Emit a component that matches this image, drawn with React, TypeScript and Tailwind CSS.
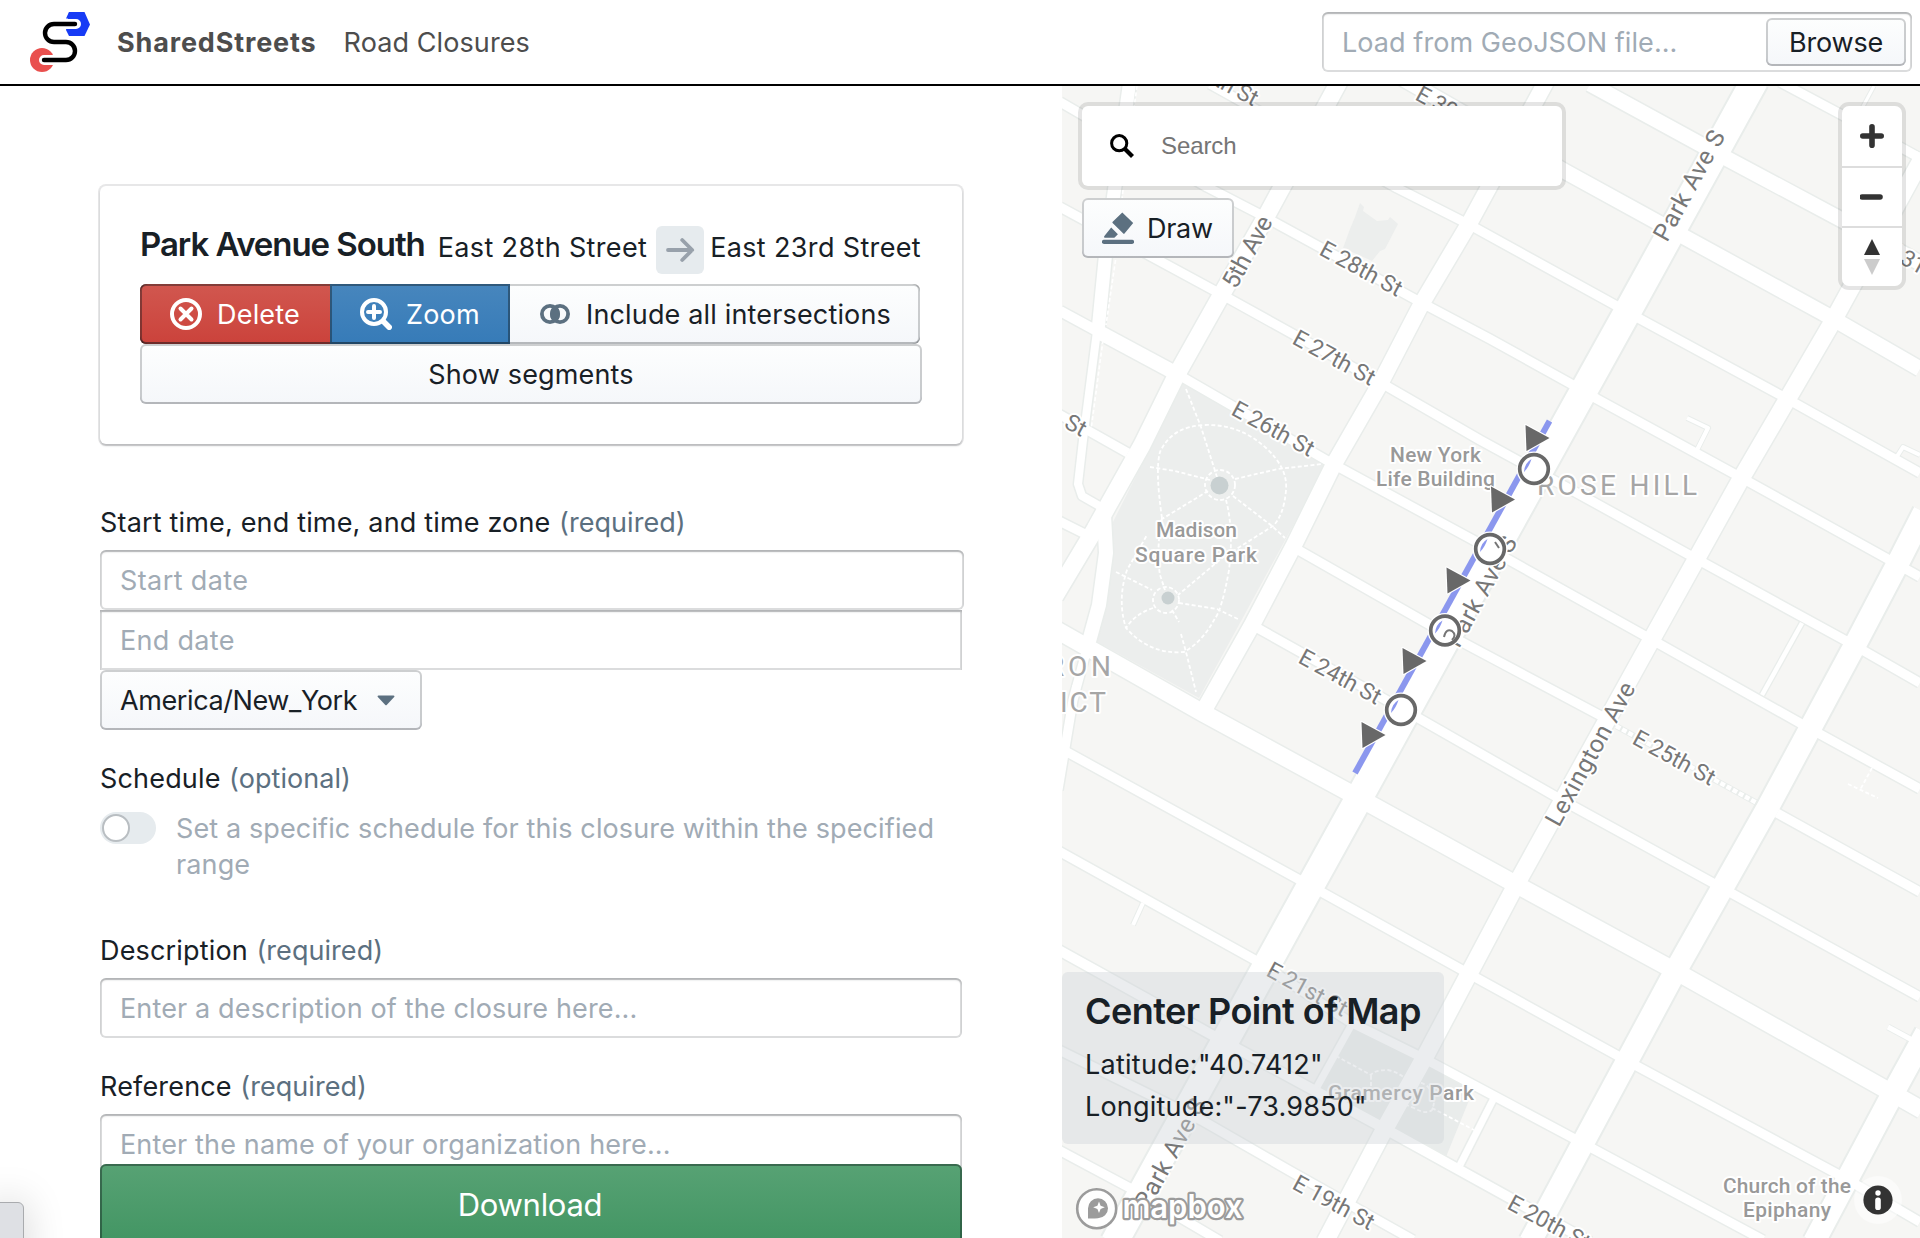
import React from 'react';

type Pt = [number, number];
type Road = { inner: number; outer: number; pts: Pt[] };
type StreetLabel = { text: string; x: number; y: number; angle: number; length: number };

const roads: Road[] = [
  // spurs and alleys
  { inner: 3, outer: 5, pts: [[1874, 86], [1860, 112]] },
  { inner: 4, outer: 6, pts: [[1143, 903], [1133, 925]] },
  { inner: 4, outer: 6, pts: [[1697, 450], [1708, 428], [1687, 418]] },
  { inner: 4.5, outer: 7, pts: [[1762, 695], [1802, 623]] },
  { inner: 4, outer: 6, pts: [[1896, 458], [1903, 447], [1920, 455]] },
  { inner: 5, outer: 7, pts: [[1888, 1027], [1914, 1041]] },
  // cross streets
  { inner: 9, outer: 12, pts: [[1060, 102], [1207, 187], [1263, 216], [1422, 303], [1490, 339], [1573, 385], [1597, 399], [1740, 477], [1895, 563], [1920, 577]] },
  { inner: 9, outer: 12, pts: [[1060, 207], [1217, 292], [1383, 384], [1480, 440], [1577, 493], [1693, 557], [1850, 643], [1920, 683]] },
  { inner: 9, outer: 12, pts: [[1210, 84], [1397, 188], [1470, 225], [1615, 305], [1640, 319], [1782, 396], [1920, 473]] },
  { inner: 15, outer: 18, pts: [[1400, 77], [1566, 172], [1688, 239], [1823, 313], [1920, 369]] },
  { inner: 15, outer: 18, pts: [[1590, 84], [1709, 149], [1842, 220], [1920, 263]] },
  { inner: 9, outer: 12, pts: [[1780, 82], [1842, 115], [1920, 158]] },
  { inner: 10, outer: 13, pts: [[1060, 311], [1097, 331]] },
  { inner: 14, outer: 17, pts: [[1097, 331], [1177, 374]] },
  { inner: 9, outer: 12, pts: [[1177, 374], [1333, 464], [1475, 541], [1647, 637], [1807, 727], [1920, 789]] },
  { inner: 9, outer: 12, pts: [[1293, 547], [1430, 625], [1603, 717]] },
  { inner: 9, outer: 12, pts: [[1777, 813], [1920, 892]] },
  { inner: 9, outer: 12, pts: [[1252, 625], [1420, 719], [1560, 799], [1713, 883], [1920, 997]] },
  { inner: 17, outer: 20, pts: [[1055, 629], [1203, 713], [1350, 793], [1517, 885], [1677, 972], [1892, 1093], [1922, 1110]] },
  { inner: 9, outer: 12, pts: [[1067, 752], [1298, 879], [1473, 976], [1620, 1057], [1843, 1177], [1920, 1222]] },
  { inner: 9, outer: 12, pts: [[1055, 849], [1255, 960], [1350, 1022], [1423, 1058], [1573, 1138], [1763, 1240]] },
  { inner: 10, outer: 13, pts: [[1055, 948], [1212, 1035], [1380, 1126], [1510, 1198], [1590, 1242]] },
  { inner: 9, outer: 12, pts: [[1055, 1048], [1203, 1121], [1290, 1171], [1413, 1240]] },
  { inner: 9, outer: 12, pts: [[1055, 1148], [1130, 1188], [1220, 1241]] },
  { inner: 9, outer: 12, pts: [[1055, 412], [1128, 453]] },
  { inner: 9, outer: 12, pts: [[1055, 519], [1085, 534]] },
  { inner: 7, outer: 10, pts: [[1352, 1024], [1317, 1087]] },
  { inner: 7, outer: 10, pts: [[1494, 1098], [1460, 1165]] },
  // Broadway
  { inner: 13, outer: 16, pts: [[1130, 80], [1106, 250], [1098, 331]] },
  { inner: 8, outer: 11, pts: [[1097, 331], [1083, 440], [1078, 484], [1082, 496], [1103, 508]] },
  { inner: 14, outer: 17, pts: [[1104, 515], [1106, 553], [1099, 605], [1088, 645]] },
  { inner: 9, outer: 12, pts: [[1088, 645], [1073, 700], [1058, 790]] },
  // avenues
  { inner: 17, outer: 20, pts: [[1340, 80], [1268, 213], [1223, 292], [1177, 374], [1142, 445], [1110, 502], [1095, 529], [1055, 596]] },
  { inner: 16, outer: 19, pts: [[1547, 80], [1470, 222], [1422, 303], [1380, 384], [1334, 464], [1293, 547], [1252, 625], [1204, 710]] },
  { inner: 27, outer: 31, pts: [[1755, 80], [1634, 300], [1491, 558], [1359, 798], [1291, 921], [1114, 1243]] },
  { inner: 17, outer: 20, pts: [[1924, 155], [1833, 321], [1742, 477], [1653, 637], [1517, 883], [1427, 1053], [1383, 1132], [1325, 1242]] },
  { inner: 22, outer: 26, pts: [[1924, 512], [1898, 563], [1855, 645], [1768, 807], [1676, 970], [1583, 1143], [1530, 1242]] },
  { inner: 22, outer: 26, pts: [[1926, 1033], [1892, 1095], [1814, 1242]] },
];

const streetLabels: StreetLabel[] = [
  { text: 'E 29th St', x: 1175, y: 64, angle: 28.6, length: 89 },
  { text: 'E 30th St', x: 1414, y: 99, angle: 28.6, length: 89 },
  { text: 'E 31st St', x: 1883, y: 254, angle: 28.6, length: 88 },
  { text: 'E 28th St', x: 1318, y: 254, angle: 28.6, length: 90 },
  { text: 'E 27th St', x: 1291, y: 343, angle: 28.6, length: 90 },
  { text: 'E 26th St', x: 1230, y: 414, angle: 28.6, length: 90 },
  { text: 'E 24th St', x: 1297, y: 662, angle: 28.6, length: 90 },
  { text: 'E 25th St', x: 1631, y: 743, angle: 28.6, length: 90 },
  { text: 'E 21st St', x: 1265, y: 975, angle: 28.6, length: 88 },
  { text: 'E 19th St', x: 1291, y: 1188, angle: 28.6, length: 89 },
  { text: 'E 20th St', x: 1506, y: 1208, angle: 28.6, length: 90 },
  { text: 'St', x: 1063, y: 427, angle: 28.6, length: 21 },
  { text: '5th Ave', x: 1236, y: 290, angle: -61.5, length: 78 },
  { text: 'Park Ave S', x: 1667, y: 243, angle: -61.2, length: 122 },
  { text: 'Park Ave S', x: 1459, y: 649, angle: -61.2, length: 122 },
  { text: 'Park Ave S', x: 1148, y: 1211, angle: -61.2, length: 122 },
  { text: 'Lexington Ave', x: 1559, y: 828, angle: -61.2, length: 160 },
];

const arrows: Pt[] = [[1525.5, 425], [1491, 486.5], [1446.5, 567.5], [1402.5, 648], [1361.5, 722]];
const nodes: Pt[] = [[1534, 469], [1490, 549], [1445, 630.5], [1401, 710]];

const toPoints = (pts: Pt[]) => pts.map((p) => p.join(',')).join(' ');

function MapCanvas() {
  return (
    <svg className="block h-full w-full" viewBox="1062 86 858 1152" preserveAspectRatio="xMinYMin slice">
      <rect x="1062" y="86" width="858" height="1152" fill="#f6f6f4" />
      <polygon points="1183,382 1330,458 1199,698 1094,640 1106,600 1114,553 1112,524 1143,462 1160,422" fill="#eceeed" />
      <polygon points="1353,1028 1372,1033 1474,1088 1446,1157 1317,1087" fill="#e9eceb" />
      <polygon points="1360,203 1364,207 1363,211 1377,221 1388,220 1390,217 1398,224 1385,249 1380,251 1372,261 1343,248 1350,229 1355,217" fill="#eceeed" />

      <g fill="none" strokeLinejoin="round">
        {roads.map((r, i) => (
          <polyline key={i} points={toPoints(r.pts)} stroke="#e9edeb" strokeWidth={r.outer} />
        ))}
        {roads.map((r, i) => (
          <polyline key={i} points={toPoints(r.pts)} stroke="#ffffff" strokeWidth={r.inner} />
        ))}
      </g>

      {/* footpaths */}
      <g fill="none" stroke="#ffffff" strokeWidth="1.8" strokeDasharray="4 2.4">
        <path d="M1186 389 L1201 427 L1217 477" />
        <path d="M1150 467 L1175 471 L1210 480 M1235 479 L1278 469 L1322 464" />
        <path d="M1162 518 Q1155 470 1160 452 Q1172 426 1205 425 Q1240 424 1266 448 Q1288 468 1286 490 Q1284 515 1273 526 L1222 558 L1178 595" />
        <path d="M1233 496 L1272 526 L1285 538 M1208 491 L1162 519 M1226 500 Q1234 530 1229 570 Q1222 610 1214 620 Q1202 642 1184 652 Q1150 655 1126 628 Q1117 600 1127 570 L1147 535 M1162 518 Q1156 550 1160 575 L1165 590" />
        <path d="M1116 572 L1152 590 M1179 603 L1217 609 L1240 620 M1153 608 Q1135 614 1126 628 M1172 610 L1179 622 M1181 634 L1186 652 L1196 692" />
        <circle cx="1220" cy="485" r="15" />
        <circle cx="1166" cy="600" r="13" />
        <path d="M1336 1056 L1371 1075 Q1374 1070 1388 1070 Q1402 1073 1410 1084 Q1416 1080 1426 1085 Q1438 1096 1432 1110 Q1426 1115 1414 1108 Q1402 1104 1397 1098 Q1376 1094 1371 1088 L1371 1075 M1424 1060 L1410 1084 L1398 1098 L1387 1122 M1432 1108 L1474 1130" />
        <path d="M1137 86 L1134 108 M1123 190 L1117 250 L1106 325 M1103 340 L1091 430" strokeWidth="1.6" />
        <path d="M1872 768 L1860 790 M1848 784 L1878 798" />
        <path d="M1073 685 L1064 740" strokeWidth="1.4" />
      </g>
      <path d="M1616 726 L1757 803" stroke="#e9edeb" strokeWidth="6" fill="none" />
      <path d="M1616 726 L1757 803" stroke="#ffffff" strokeWidth="4.4" strokeDasharray="5 2" fill="none" />
      <circle cx="1219.5" cy="485.5" r="9" fill="#c8d0d1" />
      <circle cx="1168" cy="598" r="6.5" fill="#c8d0d1" />

      {/* labels */}
      <g fontFamily="Roboto, sans-serif" stroke="#ffffff" strokeWidth="4" strokeLinejoin="round" paintOrder="stroke">
        <g fill="#777777" fontSize="23" fontWeight="400">
          {streetLabels.map((l, i) => (
            <text
              key={i}
              transform={`translate(${l.x} ${l.y}) rotate(${l.angle})`}
              textLength={l.length}
              fontSize={l.angle < 0 ? 24.5 : 23}
            >
              {l.text}
            </text>
          ))}
        </g>
        <g fill="#a6a6a6" fontSize="28" fontWeight="400">
          <text x="1537" y="495" textLength="160">ROSE HILL</text>
          <text x="1047" y="675.500" textLength="64">RON</text>
          <text x="1060" y="711.500" textLength="46">ICT</text>
        </g>
        <g fill="#999999" fontSize="21" fontWeight="500">
          <text x="1156" y="537" textLength="81">Madison</text>
          <text x="1135" y="562" textLength="122">Square Park</text>
          <text x="1390" y="462" textLength="91">New York</text>
          <text x="1376" y="486" textLength="119">Life Building</text>
          <text x="1328" y="1100" textLength="146">Gramercy Park</text>
          <text x="1723" y="1193" textLength="128">Church of the</text>
          <text x="1743" y="1217" textLength="88">Epiphany</text>
        </g>
      </g>

      {/* selected closure */}
      <path d="M1549.500 421 L1355 773" stroke="#8b97ee" strokeWidth="6" fill="none" />
      {nodes.map(([x, y]) => (
        <g key={y}>
          <circle cx={x} cy={y} r="17.500" fill="#ffffff" />
          <circle cx={x} cy={y} r="14.300" fill="#ffffff" stroke="#686868" strokeWidth="3.700" />
          <path d={`M${x - 10} ${y + 3} Q${x - 9.5} ${y - 6} ${x - 2.5} ${y - 10} Q${x - 5} ${y - 2} ${x - 10} ${y + 3}Z`} fill="#8b97ee" />
        </g>
      ))}
      <g fill="#686868" stroke="#ffffff" strokeWidth="2.4" paintOrder="stroke" strokeLinejoin="round">
        {arrows.map(([x, y]) => (
          <polygon key={y} points={`${x},${y} ${x + 24},${y + 13} ${x + 1},${y + 26}`} />
        ))}
      </g>
      <path d="M1495 542 L1499 548" stroke="#757575" strokeWidth="2" />
      <path d="M1444 637 Q1446 628 1452 631 Q1457 635 1452 640" stroke="#757575" strokeWidth="2" fill="none" />
    </svg>
  );
}

function Logo() {
  return (
    <svg className="h-[60px] w-[60px]" viewBox="0 0 60 60" fill="none">
      <path d="M39 0h15.500L60 12.500 54.500 24H39l-3-6z" fill="#173bf5" />
      <path d="M36 6.500L39 0h4v6.500z" fill="#173bf5" />
      <circle cx="12" cy="48" r="12" fill="#e9504e" />
      <path d="M46 12H25a8.500 8.500 0 0 0-8.500 8.500v1a8.500 8.500 0 0 0 8.500 8.500h12a8.500 8.500 0 0 1 8.500 8.500v1a8.500 8.500 0 0 1-8.500 8.500H14" stroke="#fff" strokeWidth="10" strokeLinecap="round" />
      <path d="M45 12H24a9 9 0 0 0-9 9a9 9 0 0 0 9 9h12a9 9 0 0 1 9 9a9 9 0 0 1-9 9H14" stroke="#000" strokeWidth="4.400" strokeLinecap="round" />
    </svg>
  );
}

const raised =
  'bg-gradient-to-b from-[#fdfefe] to-[#f5f7fa] shadow-[inset_0_0_0_2px_rgba(16,22,26,0.2),inset_0_-2px_0_rgba(16,22,26,0.1)]';
const field =
  'flex h-[60px] items-center bg-white px-5 text-[#a1abb5] shadow-[inset_0_0_0_2px_rgba(16,22,26,0.15),inset_0_2px_2px_rgba(16,22,26,0.2)]';

function Label({ text, hint }: { text: string; hint: string }) {
  return (
    <div className="flex h-9 items-center whitespace-pre pt-[2px]">
      <span>{text}</span>
      <span className="ml-[8.5px] tracking-[0.05px] text-[#5c7080]">{hint}</span>
    </div>
  );
}

function Header() {
  return (
    <header className="flex h-[86px] items-center border-b-2 border-black bg-white pl-[30px] pr-2">
      <Logo />
      <span className="ml-[27px] pt-[2px] text-[27px] font-bold leading-9 tracking-[0.85px] text-[#4d4d4d]">SharedStreets</span>
      <span className="ml-[27px] pt-[2px] text-[27px] leading-9 tracking-[0.1px] text-[#4d4d4d]">Road Closures</span>
      <div className={`${field} ml-auto w-[590px] justify-between rounded-md !pr-[6px] !pl-5`}>
        <span className="pt-[2px] tracking-[0.07px]">Load from GeoJSON file...</span>
        <span className={`${raised} flex h-12 w-[140px] items-center justify-center rounded-md pt-[2px] tracking-[-0.2px] text-[#182026]`}>
          Browse
        </span>
      </div>
    </header>
  );
}

function ClosureCard() {
  return (
    <section className="rounded-md bg-white p-10 shadow-[0_0_0_2px_rgba(16,22,26,0.1),0_2px_2px_rgba(16,22,26,0.2)]">
      <div className="flex h-12 items-center whitespace-nowrap">
        <h2 className="-mt-[13px] text-[33px] font-semibold leading-9 tracking-[-1.05px]">Park Avenue South</h2>
        <span className="-mt-[5px] ml-[13px] tracking-[0.35px]">East 28th Street</span>
        <span className="ml-auto flex size-12 items-center justify-center rounded-md bg-[#e6ebee]">
          <svg className="size-8" viewBox="0 0 32 32" fill="none" stroke="#98a1ab" strokeWidth="3.800" strokeLinecap="round" strokeLinejoin="round">
            <path d="M4 16h24M18.200 6l10 10-10 10" />
          </svg>
        </span>
        <span className="-mt-[5px] ml-[6px] mr-px tracking-[0.35px]">East 23rd Street</span>
      </div>
      <div className="mt-[10px] flex">
        <button className="flex h-[60px] w-[190px] items-center gap-[15px] rounded-l-md bg-gradient-to-b from-[#d1574f] to-[#cb423b] pl-[30px] tracking-[0.2px] text-white shadow-[inset_2px_0_0_rgba(16,22,26,0.4),inset_0_2px_0_rgba(16,22,26,0.4),inset_0_-2px_0_rgba(16,22,26,0.5)]">
          <svg className="size-8" viewBox="0 0 32 32" fill="none" stroke="#fff" strokeLinecap="round">
            <circle cx="16" cy="16" r="14" strokeWidth="4" />
            <path d="M10.500 10.500l11 11M21.500 10.500l-11 11" strokeWidth="4" />
          </svg>
          <span className="pt-[2px]">Delete</span>
        </button>
        <button className="flex h-[60px] w-[180px] items-center gap-[14px] bg-gradient-to-b from-[#4786bd] to-[#367bb8] pl-[30px] tracking-[0.2px] text-white shadow-[inset_0_0_0_2px_rgba(16,22,26,0.4),inset_0_-2px_0_rgba(16,22,26,0.2)]">
          <svg className="size-8" viewBox="0 0 32 32" fill="none" stroke="#fff" strokeLinecap="round">
            <circle cx="14" cy="14" r="12" strokeWidth="4" />
            <path d="M14 8v12M8 14h12" strokeWidth="4" />
            <path d="M24 24l5.200 5.200" strokeWidth="5.600" />
          </svg>
          <span className="pt-[2px]">Zoom</span>
        </button>
        <button className="flex h-[60px] w-[410px] items-center gap-[15px] rounded-r-md bg-gradient-to-b from-[#fdfefe] to-[#f5f7fa] pl-[29px] tracking-[0.16px] shadow-[inset_-2px_0_0_rgba(16,22,26,0.2),inset_0_2px_0_rgba(16,22,26,0.2),inset_0_-2px_0_rgba(16,22,26,0.28)]">
          <svg className="size-8" viewBox="0 0 32 32" fill="none" stroke="#5c7080" strokeWidth="3.800">
            <path d="M16 7.500a9.800 9.800 0 0 1 0 17a9.800 9.800 0 0 1 0-17z" fill="#5c7080" stroke="none" />
            <circle cx="11" cy="16" r="8.100" />
            <circle cx="21" cy="16" r="8.100" />
          </svg>
          <span className="pt-[2px]">Include all intersections</span>
        </button>
      </div>
      <button className={`${raised} flex h-[60px] w-full items-center justify-center rounded-md pt-[2px] tracking-[0.16px]`}>Show segments</button>
    </section>
  );
}

function FormPanel() {
  return (
    <main className="relative h-[1152px] w-[1062px] shrink-0 overflow-hidden bg-white pl-[100px] pt-[100px] text-[27px] leading-9 tracking-[0.17px] text-[#182026]">
      <div className="w-[862px]">
        <ClosureCard />
        <div className="mt-[60px]">
          <Label text="Start time, end time, and time zone" hint="(required)" />
          <div className={`${field} mt-[10px] w-[864px] rounded-md pt-[2px] tracking-[0.4px]`}>Start date</div>
          <div className={`${field} pt-[2px] tracking-[0.3px]`}>End date</div>
          <button className={`${raised} flex h-[60px] w-[322px] items-center justify-between rounded-md pl-5 pr-[27px] tracking-[-0.4px]`}>
            <span className="pt-[2px]">America/New_York</span>
            <svg className="h-[11px] w-[18px]" viewBox="0 0 18 11" fill="#5c7080">
              <path d="M1.500 0.500h15c.9 0 1.200.8.700 1.400L9.700 10c-.4.400-1 .4-1.400 0L.8 1.900C.3 1.300.6.500 1.500.500z" />
            </svg>
          </button>
        </div>
        <div className="mt-[30px]">
          <Label text="Schedule" hint="(optional)" />
          <div className="mt-[14px] flex h-[72px] gap-5">
            <span className="mt-[2px] flex h-8 w-14 shrink-0 items-center rounded-full bg-[#e6ebee] pl-[2px]">
              <span className="size-7 rounded-full border-2 border-[#b9bec2] bg-white" />
            </span>
            <p className="w-[770px] pt-px tracking-[0.12px] text-[#a1abb5]">
              Set a specific schedule for this closure within the specified
              <br />
              range
            </p>
          </div>
        </div>
        <div className="mt-[50px]">
          <Label text="Description" hint="(required)" />
          <div className={`${field} mt-[10px] rounded-md pt-[2px] tracking-[0.14px]`}>Enter a description of the closure here...</div>
        </div>
        <div className="mt-[30px]">
          <Label text="Reference" hint="(required)" />
          <div className={`${field} mt-[10px] rounded-md pt-[2px] tracking-[0.14px]`}>Enter the name of your organization here...</div>
        </div>
      </div>
      <button className="absolute left-[100px] top-[1078px] flex h-20 w-[862px] items-center justify-center rounded-md bg-gradient-to-b from-[#57a274] to-[#429563] pr-[2px] pt-[2px] text-[31px] tracking-[-0.3px] text-white shadow-[inset_0_0_0_2px_rgba(16,22,26,0.4),inset_0_-2px_0_rgba(16,22,26,0.2)]">
        Download
      </button>
      <div className="absolute -left-2 top-[1116px] h-20 w-8 rounded-md border border-[#a9abae] bg-[#dee0e4] shadow-[0_0_40px_rgba(0,0,0,0.18)]" />
    </main>
  );
}

function MapPanel() {
  return (
    <aside className="relative h-[1152px] w-[858px] overflow-hidden">
      <MapCanvas />

      <div className="absolute left-[20px] top-[20px] flex h-20 w-[480px] items-center rounded-[6px] bg-white pl-7 shadow-[0_0_0_4px_rgba(0,0,0,0.1)]">
        <svg className="size-6" viewBox="0 0 24 24" fill="none" stroke="#000">
          <circle cx="9.200" cy="9.200" r="7.600" strokeWidth="3" />
          <path d="M14.500 14.500l8 8" strokeWidth="4.200" />
        </svg>
        <span className="ml-[27px] font-['Liberation_Sans'] text-[24px] leading-8 tracking-[-0.1px] text-[#757575]">Search</span>
      </div>

      <button className={`${raised} absolute left-5 top-[112px] flex h-[60px] w-[152px] items-center rounded-md pl-5 text-[27px] tracking-[-0.3px] text-[#182026]`}>
        <svg className="size-8" viewBox="0 0 32 32" fill="#5c7080">
          <path d="M20.300.4L31.200 11l-8.700 10.500c-.3.500-.8.500-1.200.100L10.600 11c-.4-.4-.3-.9.100-1.200z" />
          <path d="M9.200 15.600l6.700 6.700-3 3c-.4.400-.8.500-1.300.500H3.200c-1 0-1.500-1.200-.8-1.900z" />
          <path d="M2 27.800h28a2.050 2.050 0 0 1 0 4.100H2a2.050 2.050 0 0 1 0-4.100z" />
        </svg>
        <span className="ml-[13px] pt-[2px]">Draw</span>
      </button>

      <div className="absolute left-[780px] top-5 flex h-[180px] w-[60px] flex-col rounded-[7px] bg-white shadow-[0_0_0_4px_rgba(0,0,0,0.1)]">
        <span className="flex h-[60px] items-center justify-center">
          <svg className="size-6" viewBox="0 0 24 24" stroke="#333" strokeWidth="5.600" strokeLinecap="round">
            <path d="M12 2.800v18.400M2.800 12h18.400" />
          </svg>
        </span>
        <span className="flex h-[60px] items-center justify-center border-t-2 border-[#dddddd]">
          <svg className="size-6" viewBox="0 0 24 24" stroke="#333" strokeWidth="5.600" strokeLinecap="round">
            <path d="M2.200 12h17.800" />
          </svg>
        </span>
        <span className="flex h-[60px] items-center justify-center border-t-2 border-[#dddddd]">
          <svg className="h-9 w-4" viewBox="0 0 16 36">
            <path d="M8 0l8 16H0z" fill="#333" />
            <path d="M8 36l8-16H0z" fill="#ccc" />
          </svg>
        </span>
      </div>

      <div className="absolute left-0 top-[886px] h-[172px] w-[382px] rounded-md bg-[rgba(208,212,218,0.42)] pl-[23px] pt-[17px] text-[27px] text-[#182026]">
        <h3 className="text-[36px] font-semibold leading-[44px] tracking-[-0.55px]">Center Point of Map</h3>
        <p className="mt-[11px] leading-[42px] tracking-[0.25px]">Latitude:"40.7412"</p>
        <p className="leading-[42px] tracking-[0.2px]">Longitude:"-73.9850"</p>
      </div>

      <svg className="absolute left-[12px] top-[1098px] h-12 w-[180px]" viewBox="1074 1184 180 48">
        <circle cx="1096.700" cy="1208.700" r="19.500" fill="#ffffff" fillOpacity="0.9" stroke="#9b9b9b" strokeWidth="2.600" />
        <path d="M1088 1218.500v-10.300a10 10 0 1 1 10 10c-3 .4-7 .3-10 .3z" fill="#9b9b9b" />
        <path d="M1099 1201.500l1.600 4.200 4.200 1.600-4.200 1.600-1.600 4.200-1.600-4.200-4.200-1.600 4.200-1.600z" fill="#fff" />
        <text x="1122.500" y="1218" textLength="120" lengthAdjust="spacingAndGlyphs" fontFamily="Inter, sans-serif" fontSize="32" fontWeight="600" fill="#ffffff" stroke="#9b9b9b" strokeWidth="4.400" strokeLinejoin="round" paintOrder="stroke">
          mapbox
        </text>
      </svg>

      <div className="absolute left-[792px] top-[1090px] flex size-12 items-center justify-center rounded-full bg-white/50">
        <svg className="size-[30px]" viewBox="0 0 30 30">
          <circle cx="15" cy="15" r="14.600" fill="#333" />
          <circle cx="15" cy="8" r="2.700" fill="#fff" />
          <rect x="12.200" y="12.500" width="5.600" height="12.500" rx="2.600" fill="#fff" />
        </svg>
      </div>
    </aside>
  );
}

export default function App() {
  return (
    <div className="h-[1238px] w-[1920px] overflow-hidden bg-white font-['Inter',sans-serif] text-[27px]">
      <Header />
      <div className="flex">
        <FormPanel />
        <MapPanel />
      </div>
    </div>
  );
}
